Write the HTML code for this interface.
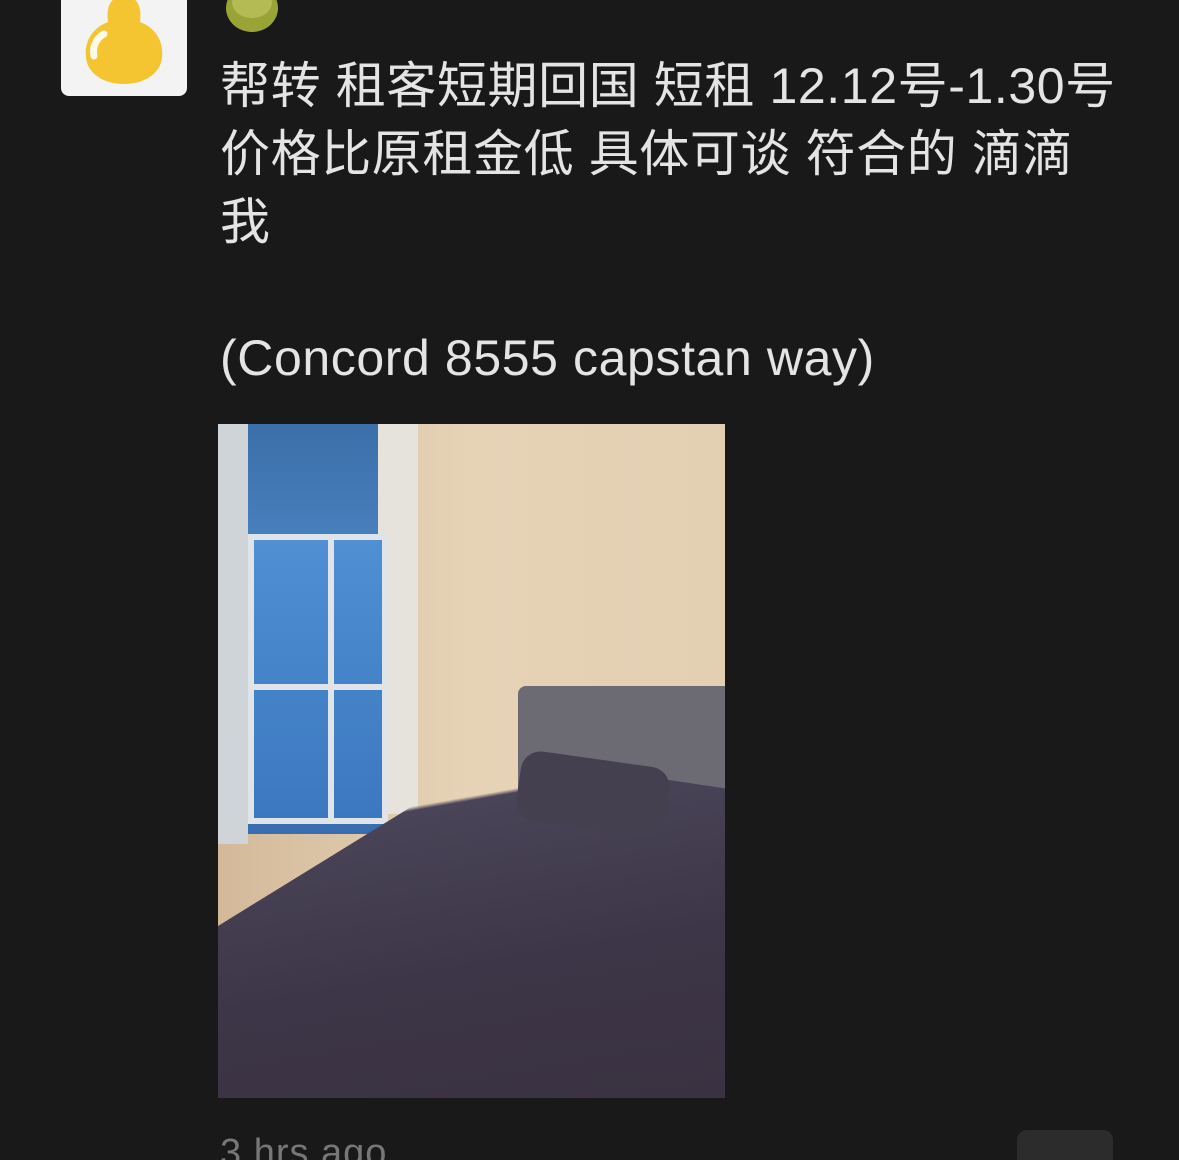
<!DOCTYPE html>
<html><head><meta charset="utf-8"><style>
html,body{margin:0;padding:0;background:#191919;width:1179px;height:1160px;overflow:hidden;position:relative;font-family:"Liberation Sans","Noto Sans CJK SC",sans-serif}
.av{position:absolute;left:61px;top:-10px;width:126px;height:106px;background:#f3f3f3;border-radius:8px;overflow:hidden}
.txt{position:absolute;left:220px;top:52px;color:#e4e4e4;font-size:50px;line-height:68px;white-space:pre;letter-spacing:0.6px}
.ph{position:absolute;left:218px;top:424px;width:507px;height:674px;overflow:hidden;background:linear-gradient(90deg,#d3b99a 0%,#e6d3b6 50%,#e3cfb2 100%)}
.time{position:absolute;left:220px;top:1132px;color:#777;font-size:38px;letter-spacing:1px}
.btn{position:absolute;left:1017px;top:1130px;width:96px;height:60px;background:#2c2c2c;border-radius:10px}
</style></head><body>
<div class="av"><svg width="126" height="106" viewBox="0 0 126 106">
<path d="M63 6c-14 0-18 12-16 26c-16 6-24 20-22 36c2 16 18 26 38 26s36-10 38-26c2-16-6-30-22-36c2-14-2-26-16-26z" fill="#f5c531"/>
<path d="M43 44c-8 4-12 14-10 22" stroke="#fff" stroke-width="7" fill="none" stroke-linecap="round" opacity=".9"/>
</svg></div>
<svg style="position:absolute;left:222px;top:-10px" width="60" height="45"><ellipse cx="30" cy="18" rx="26" ry="24" fill="#9aa336"/><ellipse cx="30" cy="12" rx="20" ry="16" fill="#b4bb55"/></svg>
<div class="txt">帮转 租客短期回国 短租 12.12号-1.30号
价格比原租金低 具体可谈 符合的 滴滴
我

(Concord 8555 capstan way)</div>
<div class="ph">
<div style="position:absolute;left:0;top:0;width:170px;height:410px;background:linear-gradient(180deg,#3b6fa8,#4d86c6 40%,#3a6db0)"></div>
<div style="position:absolute;left:0;top:0;width:30px;height:420px;background:#cfd4d8"></div>
<div style="position:absolute;left:160px;top:0;width:40px;height:390px;background:#e6e3dc"></div>
<div style="position:absolute;left:30px;top:110px;width:140px;height:290px;background:linear-gradient(180deg,#4f8fd2,#3c78c0);border:6px solid #dfe4e8;box-sizing:border-box"></div>
<div style="position:absolute;left:110px;top:110px;width:6px;height:290px;background:#dfe4e8"></div>
<div style="position:absolute;left:30px;top:260px;width:140px;height:6px;background:#dfe4e8"></div>
<div style="position:absolute;left:300px;top:262px;width:207px;height:150px;background:#6c6b73;border-radius:8px 0 0 0"></div>
<div style="position:absolute;left:0;top:330px;width:507px;height:344px;background:linear-gradient(170deg,transparent 0%,transparent 20%,#4a4458 21%,#3d3648 60%,#3a3241 100%);clip-path:polygon(55% 0,100% 10%,100% 100%,0 100%,0 50%)"></div>
<div style="position:absolute;left:300px;top:335px;width:150px;height:70px;background:#45404f;border-radius:20px;transform:rotate(8deg)"></div>
</div>
<div class="time">3 hrs ago</div>
<div class="btn"></div>
</body></html>
